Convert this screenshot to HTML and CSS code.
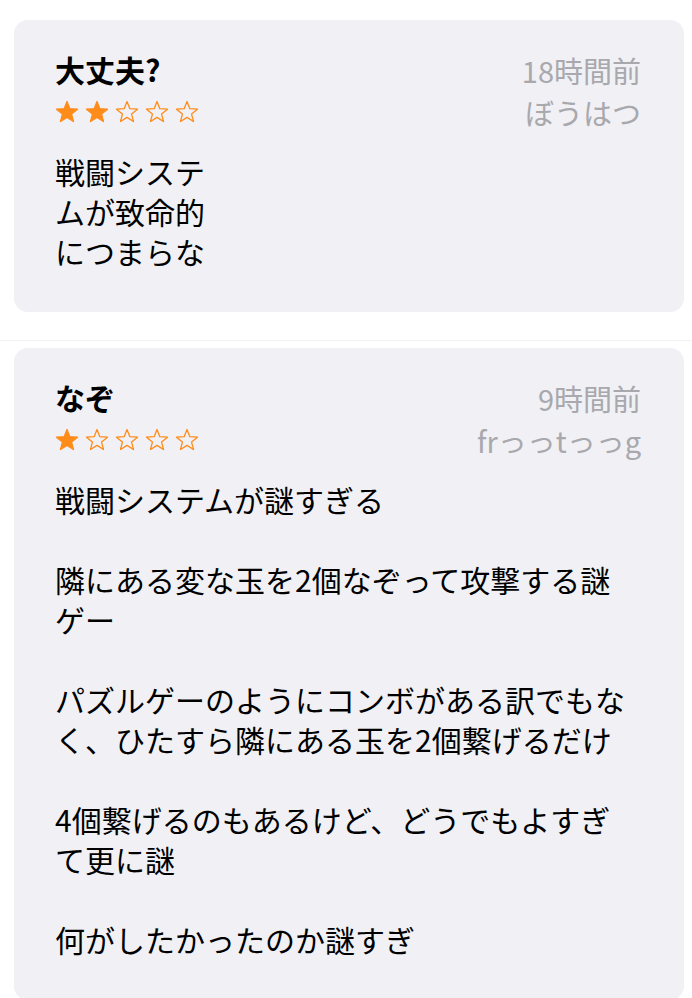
FILE: index.html
```html
<!DOCTYPE html>
<html lang="ja">
<head>
    <meta charset="UTF-8">
    <meta name="viewport" content="width=device-width, initial-scale=1.0">
    <title>レビュー</title>
    <link rel="stylesheet" href="styles.css">
</head>
<body>
    <svg class="defs" aria-hidden="true">
        <symbol id="star" viewBox="-1 -1 26 26">
            <polygon points="12,0.6 15.06,8.39 23.41,8.89 16.95,14.21 19.05,22.31 12,17.8 4.95,22.31 7.05,14.21 0.59,8.89 8.94,8.39"/>
        </symbol>
    </svg>

    <div class="review first">
        <div class="card">
            <div class="header">
                <div class="left">
                    <div class="title">大丈夫?</div>
                    <div class="stars">
                        <svg class="star on"><use href="#star"/></svg>
                        <svg class="star on"><use href="#star"/></svg>
                        <svg class="star"><use href="#star"/></svg>
                        <svg class="star"><use href="#star"/></svg>
                        <svg class="star"><use href="#star"/></svg>
                    </div>
                </div>
                <div class="meta">
                    <div>18時間前</div>
                    <div>ぼうはつ</div>
                </div>
            </div>
            <p class="text">戦闘システ<br>ムが致命的<br>につまらな</p>
        </div>
    </div>

    <div class="review second">
        <div class="card">
            <div class="header">
                <div class="left">
                    <div class="title">なぞ</div>
                    <div class="stars">
                        <svg class="star on"><use href="#star"/></svg>
                        <svg class="star"><use href="#star"/></svg>
                        <svg class="star"><use href="#star"/></svg>
                        <svg class="star"><use href="#star"/></svg>
                        <svg class="star"><use href="#star"/></svg>
                    </div>
                </div>
                <div class="meta">
                    <div>9時間前</div>
                    <div>frっっtっっg</div>
                </div>
            </div>
            <p class="text">戦闘システムが謎すぎる<br><br>隣にある変な玉を2個なぞって攻撃する謎ゲー<br><br>パズルゲーのようにコンボがある訳でもなく、ひたすら隣にある玉を2個繋げるだけ<br><br>4個繋げるのもあるけど、どうでもよすぎて更に謎<br><br>何がしたかったのか謎すぎ</p>
        </div>
    </div>
</body>
</html>
```

FILE: styles.css
```css
body {
    margin: 0;
    background: #ffffff;
    font-family: "Noto Sans CJK JP", "Noto Sans", sans-serif;
    color: #000000;
}
.defs {
    display: block;
    width: 0;
    height: 0;
    overflow: hidden;
}

.review {
    padding: 0 8px 0 14px;
}
.review.first {
    padding-top: 20px;
    padding-bottom: 28px;
    border-bottom: 1px solid #f2f2f4;
}
.review.second {
    padding-top: 7px;
}

.card {
    background: #f0f0f5;
    border-radius: 14px;
    padding: 29px 43px 41px 41px;
}

.header {
    display: flex;
    justify-content: space-between;
    align-items: flex-start;
}
.title {
    font-size: 30px;
    font-weight: bold;
    line-height: 40px;
}
.stars {
    display: flex;
    gap: 6px;
    margin-top: 11px;
}
.star {
    width: 24px;
    height: 24px;
    fill: none;
    stroke: #ff8c1a;
    stroke-width: 1.4;
    stroke-linejoin: round;
}
.star.on {
    fill: #ff8c1a;
}
.meta {
    text-align: right;
    font-size: 29px;
    line-height: 42px;
    color: #a8a8ad;
}

.text {
    margin: 18px 0 0;
    max-width: 580px;
    font-size: 30px;
    line-height: 40px;
}
```
